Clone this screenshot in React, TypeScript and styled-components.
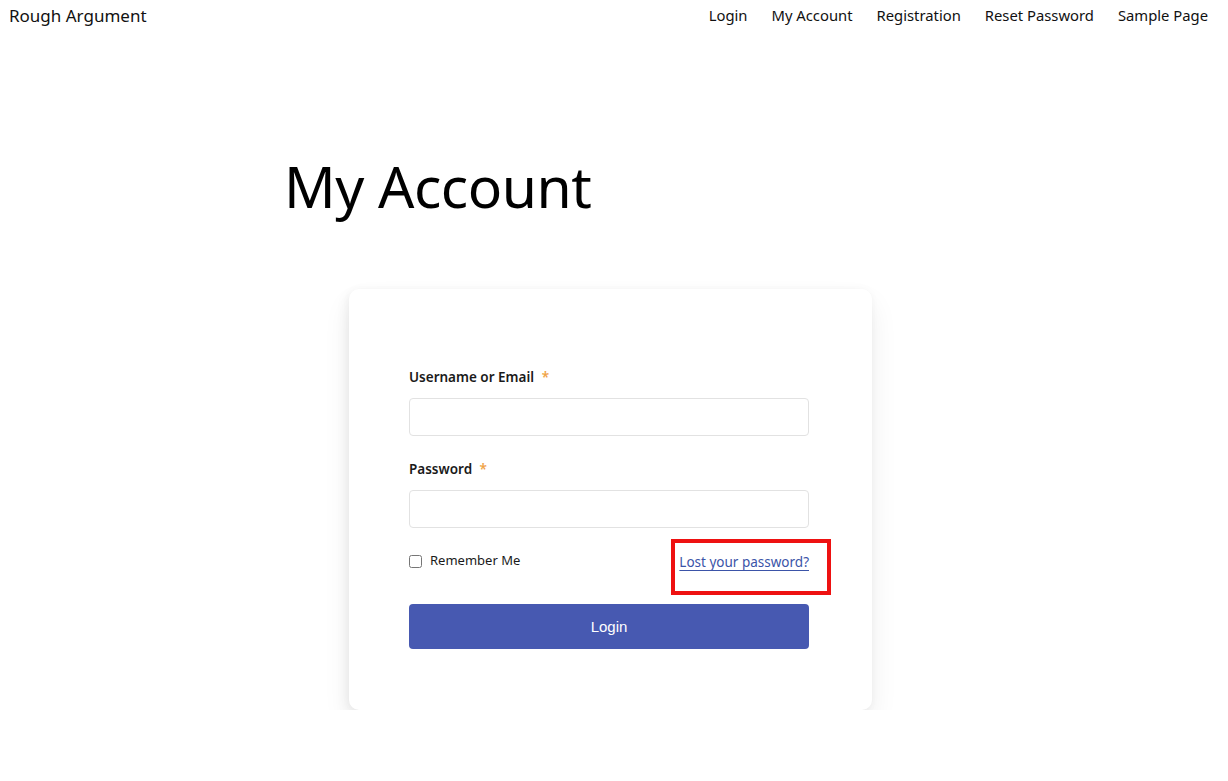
import { FC } from "react";
import styled, { createGlobalStyle } from "styled-components";

const GlobalStyle = createGlobalStyle`
    html, body {
        margin: 0;
        padding: 0;
        background: #ffffff;
        font-family: "Noto Sans", "Open Sans", sans-serif;
        color: #111;
    }
`;

const navLinks = ["Login", "My Account", "Registration", "Reset Password", "Sample Page"];

const App: FC = () => {
    return (
        <>
            <GlobalStyle />
            <Header>
                <SiteTitle>Rough Argument</SiteTitle>
                <Nav>
                    {navLinks.map((link) => (
                        <NavLink key={link}>{link}</NavLink>
                    ))}
                </Nav>
            </Header>

            <Main>
                <PageTitle>My Account</PageTitle>

                <Card>
                    <Field>
                        <Label>
                            Username or Email <Required>*</Required>
                        </Label>
                        <Input type="text" />
                    </Field>

                    <Field>
                        <Label>
                            Password <Required>*</Required>
                        </Label>
                        <Input type="password" />
                    </Field>

                    <OptionsRow>
                        <Remember>
                            <Checkbox type="checkbox" />
                            Remember Me
                        </Remember>
                        <LostWrap>
                            <LostLink href="#">Lost your password?</LostLink>
                            <Highlight />
                        </LostWrap>
                    </OptionsRow>

                    <SubmitButton>Login</SubmitButton>
                </Card>
            </Main>
        </>
    );
};

export default App;

const Header = styled.header`
    display: flex;
    justify-content: space-between;
    align-items: center;
    height: 30px;
    padding: 0 20px 0 9px;
`;

const SiteTitle = styled.div`
    font-size: 17px;
    color: #111;
`;

const Nav = styled.nav`
    display: flex;
    gap: 24px;
`;

const NavLink = styled.a`
    font-size: 14.8px;
    color: #111;
    cursor: pointer;
`;

const Main = styled.main`
    width: 660px;
    margin: 0 auto;
    padding-top: 120px;
`;

const PageTitle = styled.h1`
    margin: 0;
    font-size: 57px;
    font-weight: 400;
    line-height: 72px;
    letter-spacing: -0.5px;
    color: #000;
`;

const Card = styled.div`
    box-sizing: border-box;
    width: 523px;
    margin: 67px 0 0 65px;
    padding: 79px 63px 61px 60px;
    background: #fff;
    border-radius: 10px;
    box-shadow: 0 14px 28px rgba(0, 0, 0, 0.07), -4px 4px 12px rgba(0, 0, 0, 0.04),
        0 0 8px rgba(0, 0, 0, 0.03);
    display: flex;
    flex-direction: column;
`;

const Field = styled.div`
    display: flex;
    flex-direction: column;
    gap: 12px;
    margin-bottom: 24px;
`;

const Label = styled.label`
    font-size: 13.5px;
    font-weight: 600;
    color: #1a1a1a;
    line-height: 18px;
`;

const Required = styled.span`
    color: #f0a347;
    margin-left: 4px;
`;

const Input = styled.input`
    box-sizing: border-box;
    height: 38px;
    width: 100%;
    border: 1px solid #e2e2e2;
    border-radius: 4px;
    background: #fff;
    outline: none;
`;

const OptionsRow = styled.div`
    display: flex;
    justify-content: space-between;
    align-items: flex-start;
    margin-top: -2px;
    height: 54px;
`;

const Remember = styled.label`
    display: flex;
    align-items: center;
    gap: 8px;
    font-size: 13px;
    color: #1a1a1a;
    padding-top: 1px;
`;

const Checkbox = styled.input`
    margin: 2px 0 0;
    width: 13px;
    height: 13px;
`;

const LostWrap = styled.div`
    position: relative;
`;

const LostLink = styled.a`
    font-size: 13.5px;
    color: #3b54a8;
    text-decoration: underline;
    text-underline-offset: 3px;
`;

const Highlight = styled.div`
    position: absolute;
    left: -8px;
    top: -11px;
    width: 160px;
    height: 56px;
    box-sizing: border-box;
    border: 4px solid #ee1111;
`;

const SubmitButton = styled.button`
    height: 45px;
    width: 100%;
    border: none;
    border-radius: 4px;
    background: #4759b1;
    color: #fff;
    font-family: "Liberation Sans", Arial, sans-serif;
    font-size: 15px;
    cursor: pointer;
`;
